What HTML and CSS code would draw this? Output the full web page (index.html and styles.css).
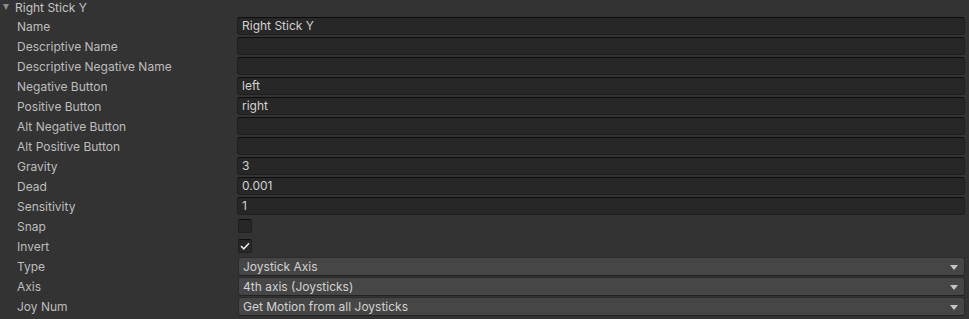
FILE: index.html
```html
<!DOCTYPE html>
<html lang="en">
<head>
    <meta charset="UTF-8">
    <title>Input Manager - Right Stick Y</title>
    <link rel="stylesheet" href="styles.css">
</head>
<body>
    <div class="axis">
        <div class="axis-header">
            <span class="foldout"></span>
            <span class="axis-title">Right Stick Y</span>
        </div>

        <div class="prop">
            <label class="prop-label">Name</label>
            <div class="text-field">Right Stick Y</div>
        </div>
        <div class="prop">
            <label class="prop-label">Descriptive Name</label>
            <div class="text-field"></div>
        </div>
        <div class="prop">
            <label class="prop-label">Descriptive Negative Name</label>
            <div class="text-field"></div>
        </div>
        <div class="prop">
            <label class="prop-label">Negative Button</label>
            <div class="text-field">left</div>
        </div>
        <div class="prop">
            <label class="prop-label">Positive Button</label>
            <div class="text-field">right</div>
        </div>
        <div class="prop">
            <label class="prop-label">Alt Negative Button</label>
            <div class="text-field"></div>
        </div>
        <div class="prop">
            <label class="prop-label">Alt Positive Button</label>
            <div class="text-field"></div>
        </div>
        <div class="prop">
            <label class="prop-label">Gravity</label>
            <div class="text-field">3</div>
        </div>
        <div class="prop">
            <label class="prop-label">Dead</label>
            <div class="text-field">0.001</div>
        </div>
        <div class="prop">
            <label class="prop-label">Sensitivity</label>
            <div class="text-field">1</div>
        </div>
        <div class="prop">
            <label class="prop-label">Snap</label>
            <div class="toggle"></div>
        </div>
        <div class="prop">
            <label class="prop-label">Invert</label>
            <div class="toggle">
                <svg width="10" height="8" viewBox="0 0 10 8"><path d="M1 4.2 L3.8 6.8 L9 1.2" fill="none" stroke="#e6e6e6" stroke-width="1.6"/></svg>
            </div>
        </div>
        <div class="prop">
            <label class="prop-label">Type</label>
            <div class="popup">Joystick Axis<span class="popup-arrow"></span></div>
        </div>
        <div class="prop">
            <label class="prop-label">Axis</label>
            <div class="popup">4th axis (Joysticks)<span class="popup-arrow"></span></div>
        </div>
        <div class="prop">
            <label class="prop-label">Joy Num</label>
            <div class="popup">Get Motion from all Joysticks<span class="popup-arrow"></span></div>
        </div>
    </div>
</body>
</html>
```

FILE: styles.css
```css
body {
    margin: 0;
    background: #333333;
    font-family: Inter, "Noto Sans", sans-serif;
    font-size: 12px;
    color: #bdbdbd;
}
.axis {
    padding-right: 4px;
}
.axis-header {
    display: flex;
    align-items: center;
    height: 14px;
    padding-left: 3px;
    margin-bottom: 2px;
}
.foldout {
    width: 0;
    height: 0;
    border-left: 3.5px solid transparent;
    border-right: 3.5px solid transparent;
    border-top: 6px solid #8e8e8e;
    margin-right: 6px;
}
.axis-title {
    color: #c4c4c4;
}
.prop {
    display: flex;
    align-items: center;
    height: 20px;
}
.prop-label {
    width: 220px;
    padding-left: 17px;
    flex-shrink: 0;
    white-space: nowrap;
}
.text-field {
    flex: 1;
    height: 16px;
    line-height: 16px;
    padding: 0 4px;
    background: #272727;
    border: 1px solid #1f1f1f;
    border-top-color: #0d0d0d;
    border-radius: 3px;
    color: #d2d2d2;
}
.toggle {
    width: 12px;
    height: 12px;
    margin-left: 1px;
    background: #272727;
    border: 1px solid #1f1f1f;
    border-top-color: #0d0d0d;
    border-radius: 2px;
    display: flex;
    align-items: center;
    justify-content: center;
}
.popup {
    flex: 1;
    position: relative;
    height: 17px;
    line-height: 17px;
    margin-left: 1px;
    padding: 0 4px;
    background: #464646;
    border: 1px solid #2c2c2c;
    border-bottom-color: #222222;
    border-radius: 3px;
    color: #d2d2d2;
}
.popup-arrow {
    position: absolute;
    right: 6px;
    top: 7px;
    width: 0;
    height: 0;
    border-left: 4px solid transparent;
    border-right: 4px solid transparent;
    border-top: 5px solid #c4c4c4;
}
```
